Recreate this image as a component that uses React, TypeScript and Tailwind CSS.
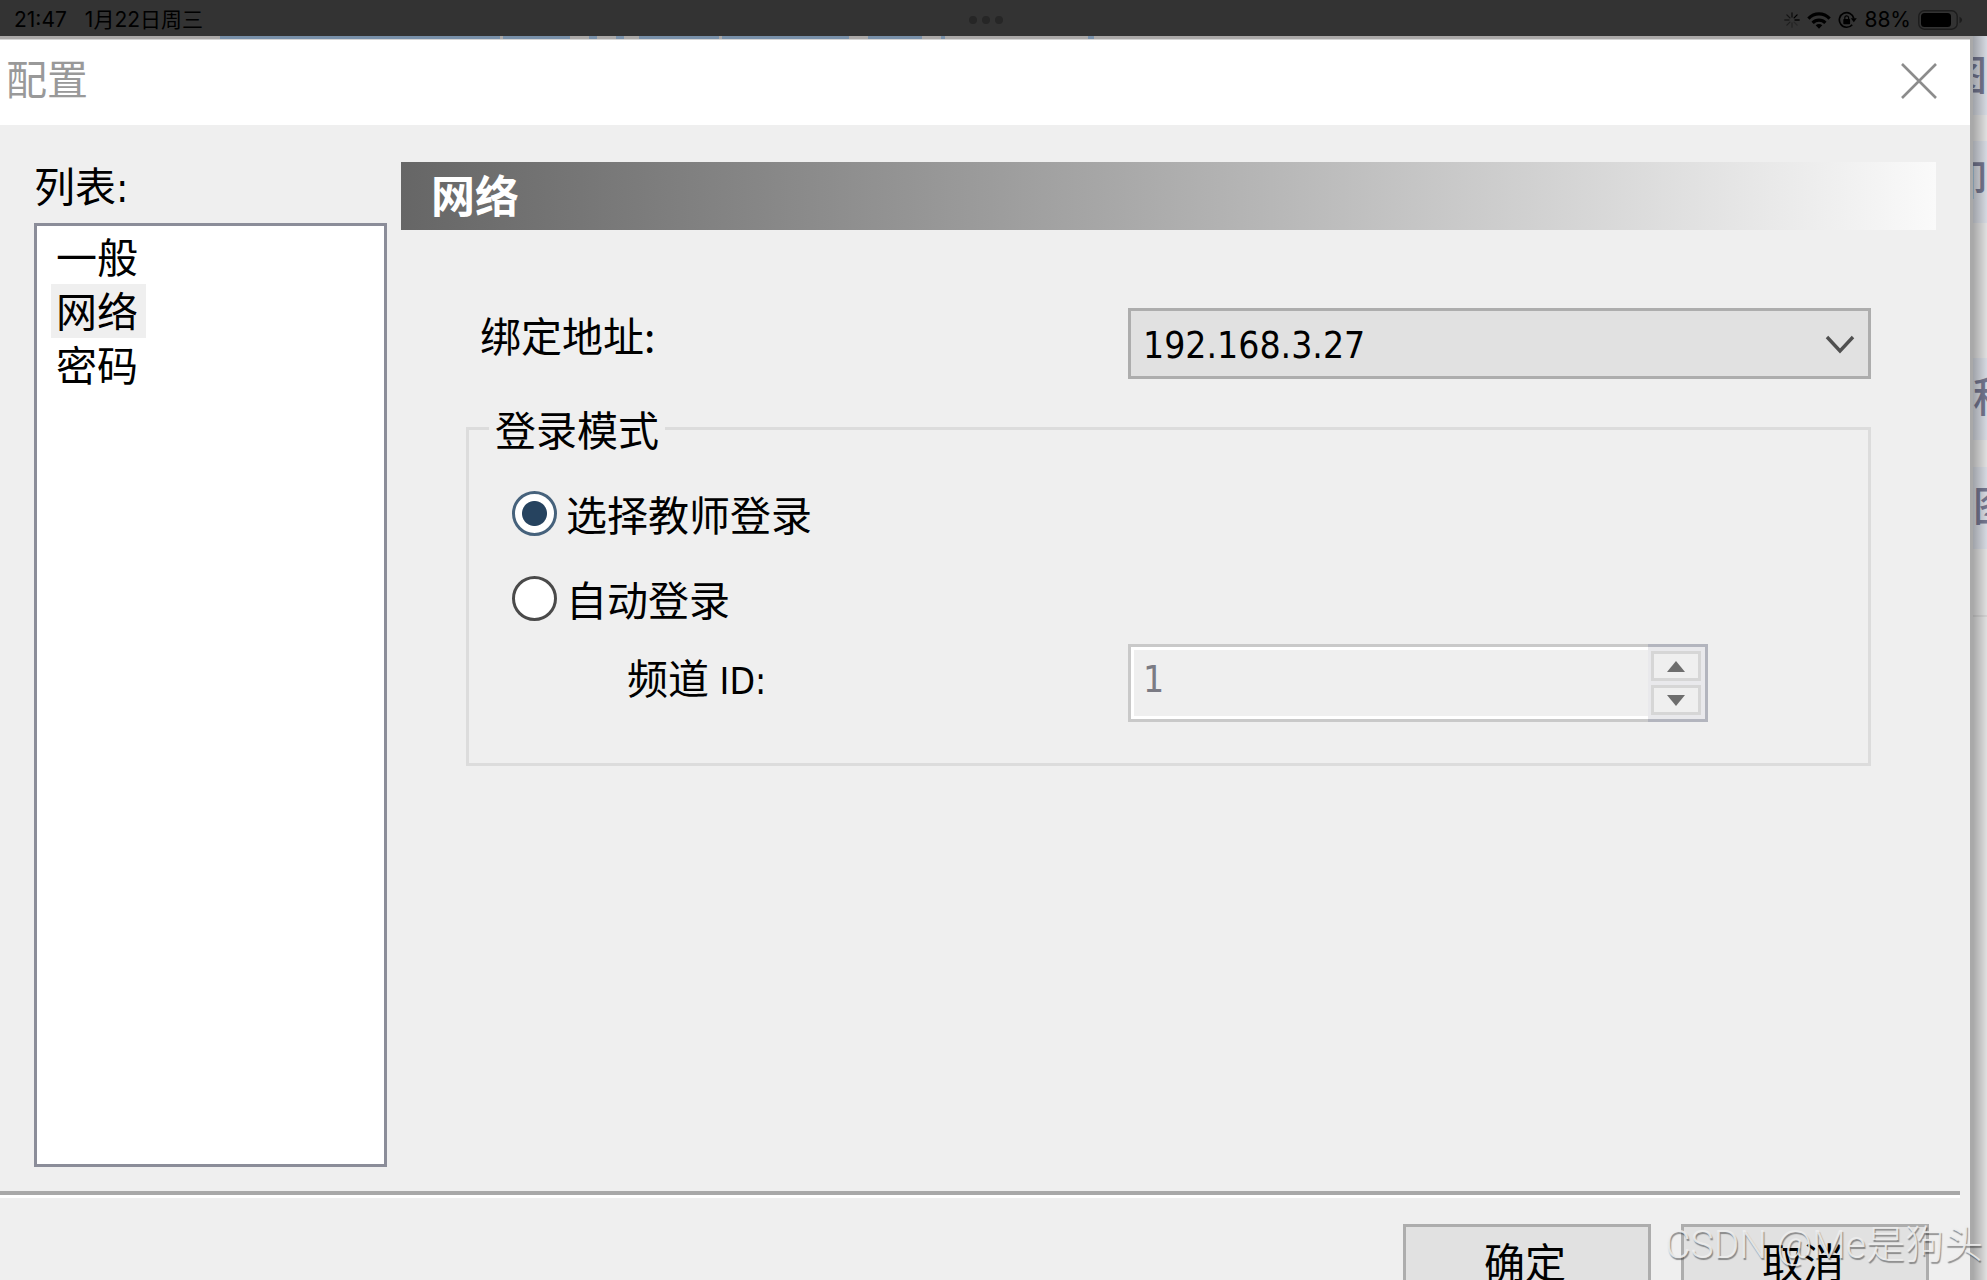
import React, { useState } from 'react';

const pages = ['一般', '网络', '密码'];

const loginModes = [
  { id: 'teacher', label: '选择教师登录' },
  { id: 'auto', label: '自动登录' },
];

function StatusBar() {
  return (
    <header className="h-9 shrink-0 bg-[#333333] text-black flex items-center justify-between pt-1 pl-3.5 pr-6 relative text-[21px] leading-8">
      <div className="flex gap-[18px] font-['Inter','Noto_Sans_CJK_SC',sans-serif]">
        <span>21:47</span>
        <span>1月22日周三</span>
      </div>
      <div className="absolute inset-x-0 top-4 flex justify-center gap-[5px] pr-[15px]">
        <span className="w-2 h-2 rounded-full bg-[#262626]" />
        <span className="w-2 h-2 rounded-full bg-[#262626]" />
        <span className="w-2 h-2 rounded-full bg-[#262626]" />
      </div>
      <div className="flex items-center gap-[7px] font-['Inter',sans-serif]">
        <SpinnerIcon />
        <WifiIcon />
        <RotationLockIcon />
        <span>88%</span>
        <BatteryIcon />
      </div>
    </header>
  );
}

function SpinnerIcon() {
  return (
    <svg width="16" height="16" viewBox="0 0 16 16" stroke="#000" strokeWidth="1.3" strokeLinecap="round">
      <path d="M8 .8v4.2" opacity=".75" />
      <path d="M13.1 2.9l-3 3" />
      <path d="M15.2 8H11" opacity=".9" />
      <path d="M13.1 13.1l-3-3" opacity=".25" />
      <path d="M8 15.2V11" opacity=".3" />
      <path d="M2.9 13.1l3-3" opacity=".4" />
      <path d="M.8 8H5" opacity=".5" />
      <path d="M2.9 2.9l3 3" opacity=".6" />
    </svg>
  );
}

function WifiIcon() {
  return (
    <svg width="24" height="17" viewBox="0 0 24 17" fill="none" stroke="#000" strokeWidth="3.2">
      <path d="M1.4 6.6C7.3 .4 16.7 .4 22.6 6.6" />
      <path d="M5.6 10.8c3.6-3.7 9.2-3.7 12.8 0" />
      <path d="M12 16.8l-3.3-3.5c1.9-1.7 4.7-1.7 6.6 0z" fill="#000" stroke="none" />
    </svg>
  );
}

function RotationLockIcon() {
  return (
    <svg width="19" height="18" viewBox="0 0 19 18" fill="none" stroke="#000" strokeWidth="1.7">
      <path d="M15.8 7.5A7.3 7.3 0 1 0 14.2 13.7" />
      <path d="M12.8 7.3h6l-3 3.9z" fill="#000" stroke="none" />
      <rect x="5.3" y="8" width="6.8" height="5.2" rx=".8" fill="#000" stroke="none" />
      <path d="M6.8 8.4V6.7a1.9 1.9 0 0 1 3.8 0v1.7" strokeWidth="1.2" />
    </svg>
  );
}

function BatteryIcon() {
  return (
    <svg width="45" height="20" viewBox="0 0 45 20">
      <rect x=".8" y=".8" width="38.4" height="18.4" rx="5.5" fill="none" stroke="#1c1c1c" strokeWidth="1.4" />
      <rect x="3" y="3" width="30" height="14" rx="3.5" fill="#000" />
      <path d="M41.5 6.8c3.4 1.5 3.4 4.9 0 6.4z" fill="#1c1c1c" />
    </svg>
  );
}

// The sliver of the window behind that shows above the dialog
function TopSliver() {
  return (
    <div className="h-1 shrink-0 bg-[#aaa8a7] border-b border-[#d5d5d5] flex pl-[220px] gap-[3px]">
      <span className="w-[280px] bg-[#7890a9]" />
      <span className="w-[67px] bg-[#7890a9]" />
      <span className="w-2 ml-4 bg-[#7890a9]" />
      <span className="w-2 ml-4 bg-[#7890a9]" />
      <span className="w-20 ml-3 bg-[#7890a9]" />
      <span className="w-[127px] bg-[#7890a9]" />
      <span className="w-[54px] ml-4 bg-[#7890a9]" />
      <span className="w-1 ml-4 bg-[#7890a9]" />
      <span className="w-1.5 ml-[140px] bg-[#7890a9]" />
    </div>
  );
}

// The strip of the window behind, right of the dialog
function BackgroundWindow() {
  return (
    <aside className="w-3.5 shrink-0 overflow-hidden bg-[#e0e0e0] text-[#73768f] text-[41px] leading-[72px] font-medium relative">
      <div className="h-[79px] bg-[#d5d9e1] flex justify-end">图</div>
      <div className="h-[82px] mt-[26px] bg-[#d5d9e1] flex justify-end">卸</div>
      <div className="h-[82px] mt-[135px] bg-[#d5d9e1]">程</div>
      <div className="h-[82px] mt-[27px] bg-[#d5d9e1]">图</div>
      <div className="mt-[66px] h-0.5 bg-[#d2d2d2]" />
      <div className="absolute inset-0 bg-linear-to-r from-black/25 to-transparent" />
    </aside>
  );
}

export default function App() {
  const [page, setPage] = useState('网络');
  const [mode, setMode] = useState('teacher');
  const [channel, setChannel] = useState(1);
  const channelDisabled = mode !== 'auto';

  return (
    <div className="h-screen overflow-hidden flex flex-col relative bg-[#efefef] text-black font-['Noto_Sans_CJK_SC',sans-serif] text-[41px] leading-[54px]">
      <StatusBar />
      <div className="flex-1 min-h-0 flex">
        <div className="flex-1 min-w-0 flex flex-col border-r-3 border-[#a9a9a9]">
          <TopSliver />
          <div className="h-[85px] shrink-0 bg-white flex items-center justify-between pl-1.5 pr-[33px] pb-1">
            <h1 className="pb-2 text-[#999999]">配置</h1>
            <button aria-label="关闭">
              <svg width="36" height="36" viewBox="0 0 36 36" stroke="#8c8c8c" strokeWidth="2.6">
                <path d="M1 1l34 34M35 1L1 35" />
              </svg>
            </button>
          </div>

          <div className="flex-1 min-h-0 flex">
            <div className="w-[387px] shrink-0 pl-[34px] pt-9 pb-6 flex flex-col">
              <h2 id="page-list" className="font-['DejaVu_Sans_Condensed','Noto_Sans_CJK_SC',sans-serif]">列表:</h2>
              <ul aria-labelledby="page-list" className="mt-2 flex-1 border-3 border-[#8b8d99] bg-white pl-3.5 pt-1">
                {pages.map(p => (
                  <li key={p}>
                    <button
                      onClick={() => setPage(p)}
                      className={`block pl-[5px] pr-2 pb-1 leading-[50px] ${p === page ? 'bg-[#efefef]' : ''}`}
                    >
                      {p}
                    </button>
                  </li>
                ))}
              </ul>
            </div>

            <main className="flex-1 min-w-0 pl-3.5 pr-[34px] pt-[37px]">
              <h2 className="h-[68px] pl-[30px] bg-linear-to-r from-[#666666] to-[#fafafa] text-white font-bold text-[44px] leading-[64px]">
                {page}
              </h2>

              <div className="px-[65px]">
                <div className="mt-[78px] grid grid-cols-[662px_1fr] items-start">
                  <label htmlFor="address" className="pl-3.5 leading-[52px]">绑定地址:</label>
                  <div className="relative">
                    <select
                      id="address"
                      className="block w-full h-[71px] appearance-none border-3 border-[#adadad] bg-[#e1e1e1] pl-3 pt-1 font-['DejaVu_Sans_Condensed',sans-serif] text-[37px] leading-[54px]"
                    >
                      <option>192.168.3.27</option>
                    </select>
                    <svg className="absolute right-4 top-[26px] pointer-events-none" width="30" height="22" viewBox="0 0 30 22" fill="none" stroke="#505050" strokeWidth="3.4">
                      <path d="M2 3l13 14L28 3" />
                    </svg>
                  </div>
                </div>

                <fieldset className="mt-[22px] border-3 border-[#dcdcdc] pb-[41px]">
                  <legend className="ml-5 px-1.5">登录模式</legend>
                  <div className="mt-[31px] pl-[43px] flex flex-col gap-[31px]">
                    {loginModes.map(m => (
                      <label key={m.id} className="flex items-center gap-[9px] w-fit">
                        <input
                          type="radio"
                          name="mode"
                          checked={mode === m.id}
                          onChange={() => setMode(m.id)}
                          className="appearance-none w-[45px] h-[45px] rounded-full border-3 border-[#4a4a4a] bg-white checked:border-[#46627c] checked:bg-[radial-gradient(circle,#26435f_0_12px,#ffffff_13px)]"
                        />
                        {m.label}
                      </label>
                    ))}
                  </div>
                  <div className="mt-[19px] grid grid-cols-[659px_580px] items-start">
                    <label htmlFor="channel" className="pl-[158px] leading-[64px]">
                      频道<span className="font-['DejaVu_Sans_Condensed',sans-serif] text-[37px]"> ID:</span>
                    </label>
                    <div className="h-[78px] flex">
                      <input
                        id="channel"
                        type="text"
                        value={channel}
                        disabled={channelDisabled}
                        onChange={e => setChannel(Number(e.target.value) || 0)}
                        className="flex-1 min-w-0 border-3 border-r-0 border-[#c9c9c9] shadow-[inset_3px_0_0_#fff,inset_0_3px_0_#fff,inset_0_-3px_0_#fff] bg-[#efefef] pl-3 pb-1.5 font-['DejaVu_Sans_Condensed',sans-serif] text-[37px] text-[#7b7b84]"
                      />
                      <div className="w-[60px] border-3 border-l-0 border-[#b3b5be] bg-[#e9e9ec] p-1 pl-[3px] flex flex-col gap-1">
                        <button
                          aria-label="增加"
                          disabled={channelDisabled}
                          onClick={() => setChannel(c => c + 1)}
                          className="flex-1 border-3 border-[#d6d6d6] bg-[#efefef] flex items-center justify-center"
                        >
                          <svg width="18" height="11" viewBox="0 0 18 11"><path d="M9 0l9 11H0z" fill="#6d6d6d" /></svg>
                        </button>
                        <button
                          aria-label="减少"
                          disabled={channelDisabled}
                          onClick={() => setChannel(c => Math.max(1, c - 1))}
                          className="flex-1 border-3 border-[#d6d6d6] bg-[#efefef] flex items-center justify-center"
                        >
                          <svg width="18" height="11" viewBox="0 0 18 11"><path d="M0 0h18L9 11z" fill="#6d6d6d" /></svg>
                        </button>
                      </div>
                    </div>
                  </div>
                </fieldset>
              </div>
            </main>
          </div>

          <footer className="h-[89px] shrink-0">
            <div className="mr-2.5 h-[7px] border-t-4 border-[#a8a8a8] bg-white" />
            <div className="mt-[26px] pr-[41px] flex justify-end gap-[30px]">
              <button className="w-[248px] h-[76px] border-3 border-[#adadad] bg-[#e1e1e1] pr-1 pb-1">确定</button>
              <button className="w-[248px] h-[76px] border-3 border-[#adadad] bg-[#e1e1e1] pr-1 pb-1">取消</button>
            </div>
          </footer>
        </div>
        <BackgroundWindow />
      </div>

      <p className="absolute right-1 bottom-2 font-['Roboto','Noto_Sans_CJK_SC',sans-serif] font-light text-[39px] leading-[54px] text-[#eeeeee]/90 text-shadow-[1px_2px_1px_#00000066] pointer-events-none">
        CSDN @Me是狗头
      </p>
    </div>
  );
}
